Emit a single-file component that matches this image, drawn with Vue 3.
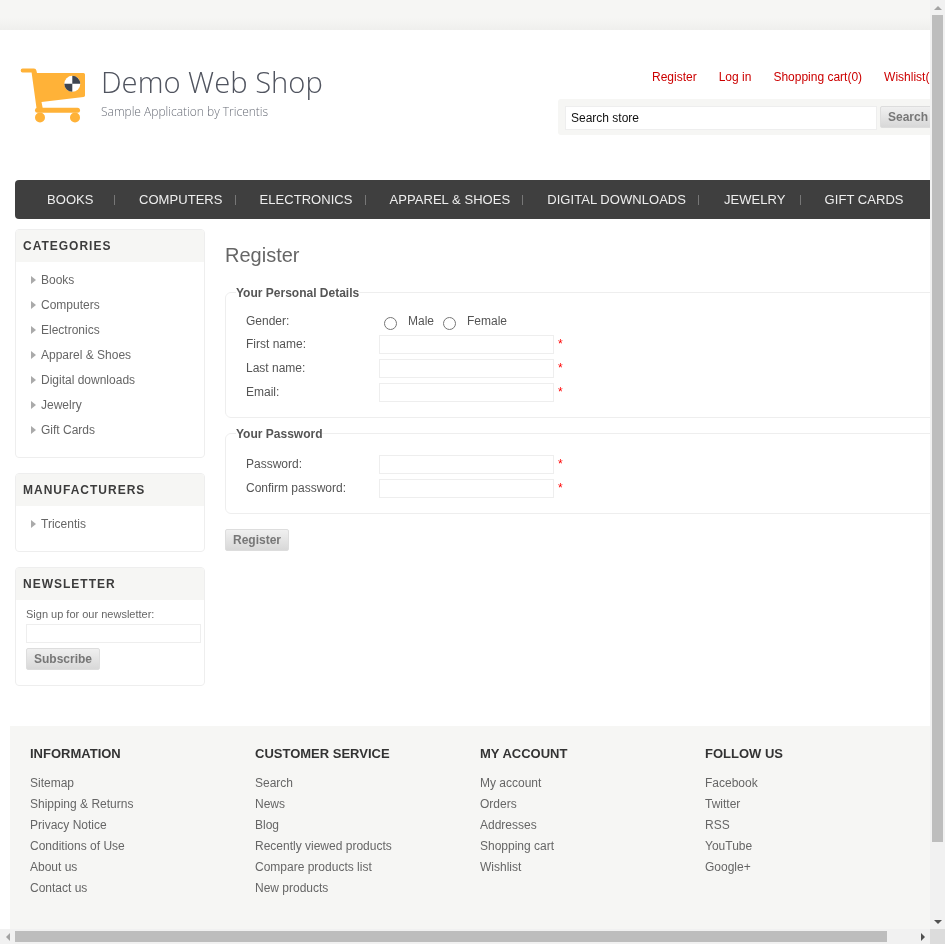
<script setup>
const headerLinks = ['Register', 'Log in', 'Shopping cart(0)', 'Wishlist(0)']
const menu = ['BOOKS', 'COMPUTERS', 'ELECTRONICS', 'APPAREL & SHOES', 'DIGITAL DOWNLOADS', 'JEWELRY', 'GIFT CARDS']
const categories = ['Books', 'Computers', 'Electronics', 'Apparel & Shoes', 'Digital downloads', 'Jewelry', 'Gift Cards']
const personal = ['First name:', 'Last name:', 'Email:']
const password = ['Password:', 'Confirm password:']
const footer = [
  { title: 'INFORMATION', links: ['Sitemap', 'Shipping & Returns', 'Privacy Notice', 'Conditions of Use', 'About us', 'Contact us'] },
  { title: 'CUSTOMER SERVICE', links: ['Search', 'News', 'Blog', 'Recently viewed products', 'Compare products list', 'New products'] },
  { title: 'MY ACCOUNT', links: ['My account', 'Orders', 'Addresses', 'Shopping cart', 'Wishlist'] },
  { title: 'FOLLOW US', links: ['Facebook', 'Twitter', 'RSS', 'YouTube', 'Google+'] }
]
</script>

<template>
  <div class="screen">
    <div class="viewport">
      <div class="page">
        <div class="topbar"></div>

        <div class="wrap">
          <header class="header">
            <div class="logo">
              <svg class="cart" width="70" height="60" viewBox="0 0 70 60">
                <path d="M2.5 0.5H14Q16 0.5 16.4 2.5L17 5H63.5Q65 5 65 6.5V27.5Q65 28.7 63.5 29L21.5 34L22.7 40H16.5L11.6 4.5H2.5Q0.7 4.5 0.7 2.5Q0.7 0.5 2.5 0.5Z" fill="#ffb238" />
                <rect x="15" y="39.8" width="45" height="5" rx="2.5" fill="#ffb238" />
                <circle cx="20" cy="49.5" r="5" fill="#ffb238" />
                <circle cx="55" cy="49.5" r="5" fill="#ffb238" />
                <circle cx="52.3" cy="15.8" r="8" fill="#fff" />
                <path d="M52.3 15.8V7.8A8 8 0 0 1 60.3 15.8ZM52.3 15.8V23.8A8 8 0 0 1 44.3 15.8Z" fill="#3e4551" />
              </svg>
              <div class="logo-text">
                <div class="shop-name">Demo Web Shop</div>
                <div class="shop-sub">Sample Application by Tricentis</div>
              </div>
            </div>
            <div class="header-right">
              <div class="header-links">
                <a v-for="l in headerLinks" :key="l">{{ l }}</a>
              </div>
              <div class="search">
                <input class="search-input" type="text" value="Search store">
                <button class="btn search-btn">Search</button>
              </div>
            </div>
          </header>

          <nav class="menu">
            <a v-for="m in menu" :key="m" class="menu-item">{{ m }}</a>
          </nav>

          <div class="columns">
            <aside class="side">
              <section class="block">
                <h3>CATEGORIES</h3>
                <ul>
                  <li v-for="c in categories" :key="c">{{ c }}</li>
                </ul>
              </section>
              <section class="block">
                <h3>MANUFACTURERS</h3>
                <ul>
                  <li>Tricentis</li>
                </ul>
              </section>
              <section class="block">
                <h3>NEWSLETTER</h3>
                <div class="news">
                  <label>Sign up for our newsletter:</label>
                  <input type="text">
                  <button class="btn">Subscribe</button>
                </div>
              </section>
            </aside>

            <main class="main">
              <h1>Register</h1>
              <fieldset>
                <legend>Your Personal Details</legend>
                <div class="gender">
                  <label class="lbl">Gender:</label>
                  <input type="radio" name="gender" class="r1">
                  <span class="male">Male</span>
                  <input type="radio" name="gender" class="r2">
                  <span class="female">Female</span>
                </div>
                <div v-for="f in personal" :key="f" class="row">
                  <label class="lbl">{{ f }}</label>
                  <input type="text">
                  <span class="req">*</span>
                </div>
              </fieldset>
              <fieldset class="pass">
                <legend>Your Password</legend>
                <div v-for="f in password" :key="f" class="row">
                  <label class="lbl">{{ f }}</label>
                  <input type="password">
                  <span class="req">*</span>
                </div>
              </fieldset>
              <button class="btn register">Register</button>
            </main>
          </div>

          <footer class="footer">
            <div v-for="col in footer" :key="col.title" class="foot-col">
              <h4>{{ col.title }}</h4>
              <a v-for="l in col.links" :key="l">{{ l }}</a>
            </div>
          </footer>
        </div>
      </div>
    </div>

    <div class="vbar">
      <div class="arrow-box"><i class="up"></i></div>
      <div class="vthumb"></div>
      <div class="arrow-box down-box"><i class="down"></i></div>
    </div>
    <div class="hbar">
      <div class="arrow-box"><i class="left"></i></div>
      <div class="hthumb"></div>
      <div class="arrow-box right-box"><i class="right"></i></div>
    </div>
    <div class="corner"></div>
  </div>
</template>

<style scoped>
.screen {
  display: grid;
  grid-template-columns: 930px 15px;
  grid-template-rows: 929px 15px;
  width: 945px;
  height: 944px;
  overflow: hidden;
}

.viewport {
  overflow: hidden;
  background: #fff;
}

.vbar {
  display: flex;
  flex-direction: column;
  align-items: center;
  background: #f1f1f1;
}

.hbar {
  display: flex;
  align-items: center;
  background: #f1f1f1;
}

.corner {
  background: #dcdcdc;
}

.arrow-box {
  flex: none;
  display: flex;
  align-items: center;
  justify-content: center;
  width: 15px;
  height: 15px;
}

.down-box {
  margin-top: auto;
}

.right-box {
  margin-left: auto;
}

.vthumb {
  width: 11px;
  height: 827px;
  background: #bdbdbd;
}

.hthumb {
  width: 872px;
  height: 11px;
  background: #bdbdbd;
}

.up {
  border: 4px solid transparent;
  border-top: 0;
  border-bottom-color: #a3a3a3;
}

.down {
  border: 4px solid transparent;
  border-bottom: 0;
  border-top-color: #505050;
}

.left {
  border: 4px solid transparent;
  border-left: 0;
  border-right-color: #a3a3a3;
}

.right {
  border: 4px solid transparent;
  border-right: 0;
  border-left-color: #505050;
}

.page {
  width: 960px;
  height: 1011px;
  font-family: "Liberation Sans", Arial, sans-serif;
  font-size: 12px;
  color: #666;
  will-change: transform;
}

.topbar {
  height: 30px;
  background: linear-gradient(#f6f6f4 60%, #efefed);
}

.wrap {
  padding: 0 10px;
}

.header {
  display: flex;
  justify-content: space-between;
  height: 150px;
  padding: 0 5px;
}

.logo {
  display: flex;
  padding: 37.5px 0 0 5px;
}

.logo-text {
  margin: -8px 0 0 11px;
}

.shop-name {
  font-family: "Open Sans", sans-serif;
  font-weight: 300;
  font-size: 29.2px;
  line-height: 44px;
  color: #50545f;
}

.shop-sub {
  font-family: "Open Sans", sans-serif;
  font-weight: 300;
  font-size: 12px;
  line-height: 16px;
  color: #6a6e78;
}

.header-right {
  width: 387px;
  padding-top: 40px;
}

.header-links {
  display: flex;
  gap: 22px;
  height: 29px;
  padding-left: 94px;
  line-height: 14px;
  white-space: nowrap;
}

.header-links a {
  color: #c00;
}

.search {
  box-sizing: border-box;
  display: flex;
  align-items: flex-start;
  height: 36px;
  padding: 7px;
  background: #f6f6f4;
  border-radius: 3px;
}

.search-input {
  box-sizing: border-box;
  flex: none;
  width: 312px;
  height: 24px;
  padding: 0 5px;
  border: 1px solid #eee;
  font: 12px "Liberation Sans", Arial, sans-serif;
  color: #111;
}

.btn {
  height: 22px;
  padding: 0 7px;
  border: 1px solid #ddd;
  border-radius: 2px;
  background: linear-gradient(#f0f0f0, #d8d8d8);
  font: bold 12px "Liberation Sans", Arial, sans-serif;
  color: #777;
}

.search-btn {
  margin-left: 3px;
}

.menu {
  display: flex;
  align-items: center;
  height: 39px;
  margin: 0 5px;
  padding-left: 8px;
  background: #3f3f3f;
  border-radius: 4px;
}

.menu-item {
  display: flex;
  align-items: center;
  height: 10px;
  padding: 0 12px 0 24px;
  border-right: 1px solid #777;
  font-size: 13px;
  letter-spacing: 0.05px;
  color: #eee;
  white-space: nowrap;
}

.menu-item:first-child {
  padding-right: 20.5px;
}

.menu-item:nth-child(6) {
  padding-left: 25px;
  padding-right: 14px;
}

.menu-item:last-child {
  border-right: 0;
}

.columns {
  display: flex;
  gap: 20px;
  height: 497px;
  padding: 10px 5px 0;
}

.side {
  display: flex;
  flex: none;
  flex-direction: column;
  gap: 15px;
  width: 190px;
}

.block {
  box-sizing: border-box;
  overflow: hidden;
  border: 1px solid #eee;
  border-radius: 4px;
}

.block h3 {
  height: 32px;
  margin: 0;
  padding: 0 7px;
  background: #f6f6f4;
  font-size: 12px;
  line-height: 33px;
  letter-spacing: 1px;
  color: #3c3c3c;
}

.block ul {
  margin: 0;
  padding: 6px 0 14px 25px;
  list-style: none;
}

.block li {
  position: relative;
  height: 25px;
  line-height: 25px;
}

.block li::before {
  content: "";
  position: absolute;
  left: -10px;
  top: 8px;
  border-left: 5px solid #aaa;
  border-top: 4px solid transparent;
  border-bottom: 4px solid transparent;
}

.news {
  padding: 7px 0 15px 10px;
  font-size: 11px;
}

.news label {
  display: block;
  height: 17px;
  line-height: 15px;
}

.news input {
  display: block;
  box-sizing: border-box;
  width: 175px;
  height: 19px;
  margin-bottom: 5px;
  padding: 0;
  border: 1px solid #eee;
}

.main {
  flex: 1;
  min-width: 0;
}

h1 {
  box-sizing: border-box;
  height: 44px;
  margin: 0;
  padding-top: 2px;
  font-size: 20px;
  font-weight: normal;
  line-height: 48px;
  color: #666;
}

fieldset {
  box-sizing: border-box;
  height: 134px;
  margin: 11px 0 0;
  padding: 9px 0 0 20px;
  border: 1px solid #eee;
  border-radius: 6px;
}

legend {
  margin-left: -10px;
  padding: 2px 0 0;
  background: #fff;
  color: #555;
  font-weight: bold;
  line-height: 14px;
}

.pass {
  height: 89px;
  margin-top: 7px;
  padding-top: 11px;
}

.row,
.gender {
  display: flex;
  align-items: center;
  height: 24px;
}

.lbl {
  flex: none;
  width: 133px;
  color: #555;
}

.row input {
  box-sizing: border-box;
  width: 175px;
  height: 19px;
  padding: 0;
  border: 1px solid #eee;
}

.req {
  margin-left: 4px;
  color: #f00;
}

.gender {
  height: 23px;
  color: #555;
}

.gender input {
  margin: 6px 0 0;
}

.gender .r1 {
  margin-left: 5px;
}

.male {
  margin-left: 11px;
}

.gender .r2 {
  margin-left: 9px;
}

.female {
  margin-left: 11px;
}

.register {
  display: block;
  margin-top: 15px;
}

.footer {
  box-sizing: border-box;
  display: flex;
  height: 285px;
  padding: 20px 0 0 20px;
  background: #f6f6f4;
}

.foot-col {
  width: 225px;
}

.foot-col h4 {
  margin: 0 0 12px;
  font-size: 13px;
  line-height: 15px;
  color: #333;
}

.foot-col a {
  display: block;
  height: 21px;
  line-height: 21px;
}
</style>

<style>
html, body {
  margin: 0;
  background: #fff;
}
</style>
